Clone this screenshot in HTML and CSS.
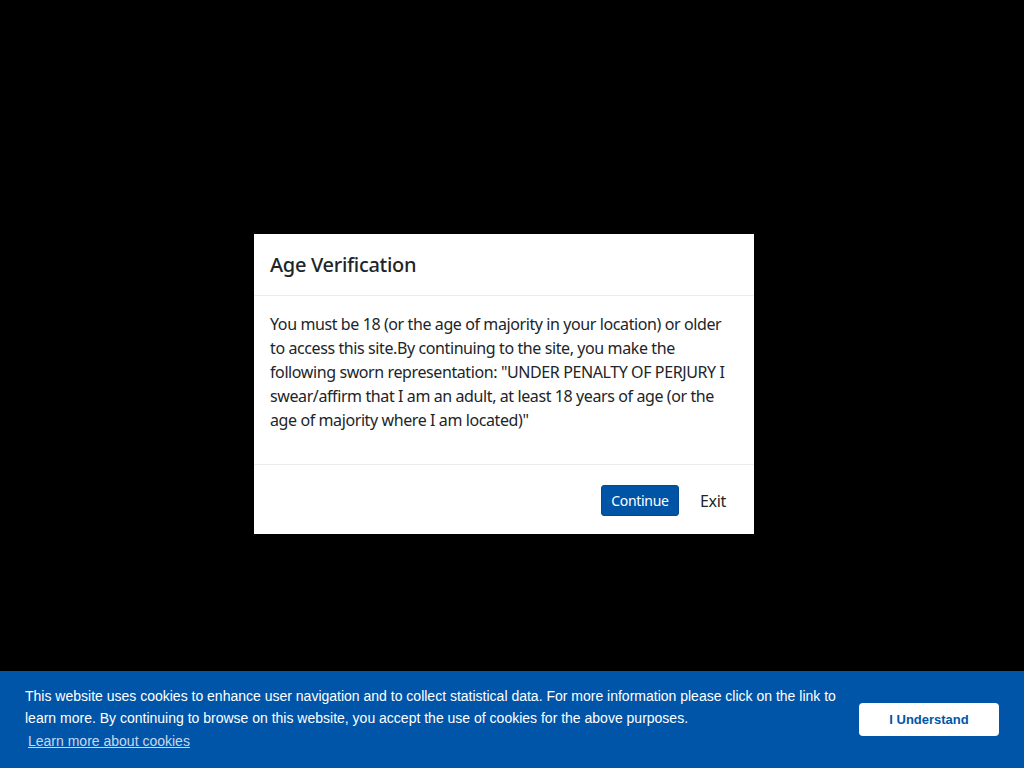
FILE: index.html
```html
<!DOCTYPE html>
<html lang="en">
<head>
<meta charset="utf-8">
<title>Age Verification</title>
<link rel="stylesheet" href="styles.css">
</head>
<body>
<div class="overlay">
  <div class="modal">
    <div class="modal-header">
      <h5 class="modal-title">Age Verification</h5>
    </div>
    <div class="modal-body">
      <p>You must be 18 (or the age of majority in your location) or older to access this site.By continuing to the site, you make the following sworn representation: "UNDER PENALTY OF PERJURY I swear/affirm that I am an adult, at least 18 years of age (or the age of majority where I am located)"</p>
    </div>
    <div class="modal-footer">
      <button class="btn-continue">Continue</button>
      <button class="btn-exit">Exit</button>
    </div>
  </div>
</div>
<div class="cookie-bar">
  <div class="cookie-text">
    <span>This website uses cookies to enhance user navigation and to collect statistical data. For more information please click on the link to learn more. By continuing to browse on this website, you accept the use of cookies for the above purposes.</span>
    <a class="cookie-link" href="#">Learn more about cookies</a>
  </div>
  <button class="cookie-btn">I Understand</button>
</div>
</body>
</html>
```
FILE: styles.css
```css
html, body {
  margin: 0;
  padding: 0;
  height: 100%;
  background: #000;
}
body {
  font-family: "Noto Sans", "Open Sans", sans-serif;
  color: #212529;
}
.overlay {
  position: fixed;
  top: 0;
  left: 0;
  right: 16px;
  bottom: 0;
  display: flex;
  align-items: center;
  justify-content: center;
}
.modal {
  width: 500px;
  background: #fff;
  box-sizing: border-box;
}
.modal-header {
  padding: 16px 16px 15px;
  border-bottom: 1px solid #e9ecef;
}
.modal-title {
  margin: 0;
  font-size: 20px;
  line-height: 30px;
  font-weight: 500;
  letter-spacing: -0.3px;
  color: #212529;
}
.modal-body {
  padding: 16px;
}
.modal-body p {
  margin: 0 0 16px;
  font-size: 16px;
  line-height: 24px;
  letter-spacing: -0.4px;
}
.modal-footer {
  border-top: 1px solid #e9ecef;
  padding: 20px 16px 18px;
  display: flex;
  justify-content: flex-end;
  align-items: center;
}
.btn-continue {
  font-family: inherit;
  font-size: 14px;
  line-height: 21px;
  width: 78px;
  height: 31px;
  padding: 0;
  letter-spacing: -0.3px;
  background: #0054a6;
  color: #fff;
  border: 1px solid #004a94;
  border-radius: 3px;
}
.btn-exit {
  font-family: inherit;
  font-size: 16px;
  line-height: 24px;
  padding: 3px 12px;
  margin-left: 9px;
  letter-spacing: -0.3px;
  background: none;
  border: none;
  color: #212529;
}
.cookie-bar {
  position: fixed;
  left: 0;
  right: 0;
  bottom: 0;
  height: 97px;
  box-sizing: border-box;
  background: #0055a8;
  padding: 14px 25px 0 25px;
  display: flex;
  align-items: flex-start;
  font-family: "Liberation Sans", Arial, sans-serif;
  font-size: 14px;
  line-height: 22px;
  color: #fff;
}
.cookie-text {
  flex: 1;
  margin-right: 22px;
}
.cookie-link {
  display: block;
  margin-top: 1px;
  padding-left: 3px;
  color: #c8d8ee;
  text-decoration: underline;
}
.cookie-btn {
  margin-top: 18px;
  width: 140px;
  height: 33px;
  background: #fff;
  color: #0055a8;
  border: none;
  border-radius: 4px;
  font-family: "Liberation Sans", Arial, sans-serif;
  font-weight: bold;
  font-size: 13px;
  flex-shrink: 0;
}
```
